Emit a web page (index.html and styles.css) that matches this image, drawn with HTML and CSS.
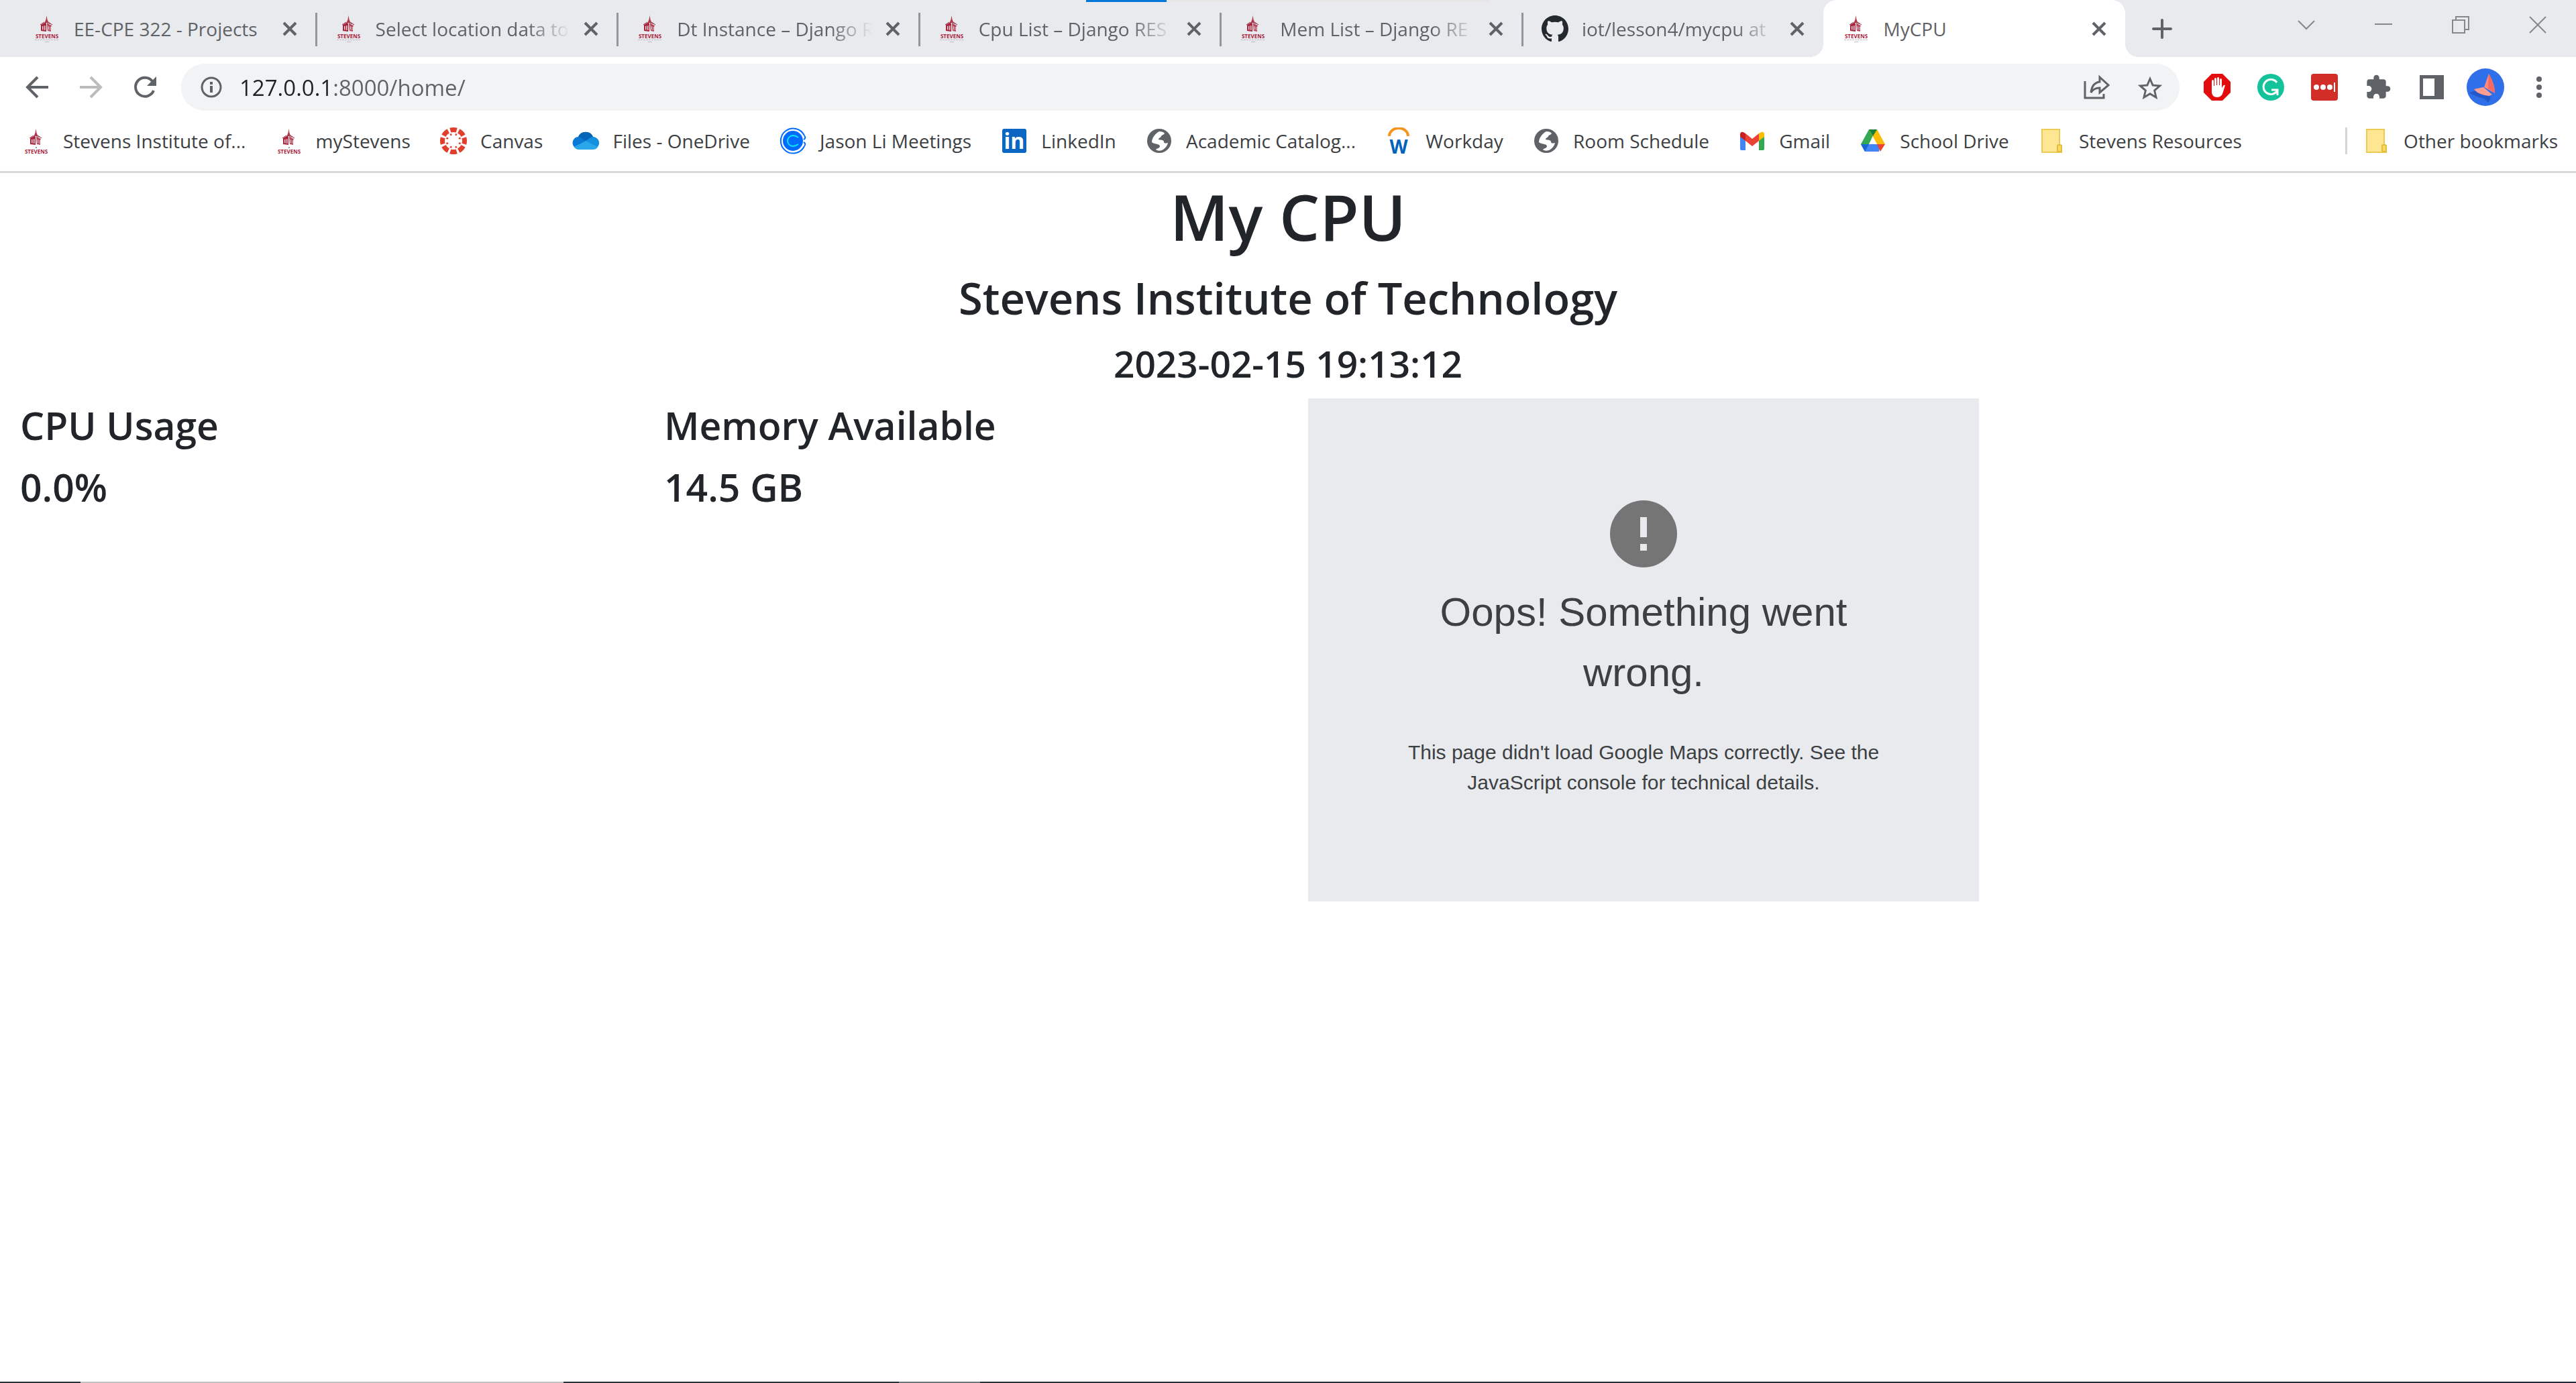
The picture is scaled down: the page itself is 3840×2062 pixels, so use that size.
FILE: index.html
```html
<!DOCTYPE html>
<html lang="en">
<head>
<meta charset="utf-8">
<title>MyCPU</title>
<link rel="stylesheet" href="styles.css">
</head>
<body>
<svg class="sprite" aria-hidden="true">
  <symbol id="tower" viewBox="0 0 40 26">
    <path d="M19.500 0l1 6 2 5h-6l2-5z" fill="#b4384c"/>
    <path d="M11 14l7-4 1 3 0 11-8-1z" fill="#a8233b"/>
    <path d="M20 12l7 3-1 2v7l-5-1z" fill="#b8465a"/>
    <path d="M13 16l1.500-.5v6l-1.500-.3zM16 15.500l1.500-.5v7l-1.500-.3zM22 16l1 .5v5l-1-.5zM24.500 17h.8v5h-.8z" fill="#efdde1"/>
    <path d="M10 14l6-4M22 10l6 4M20 12l5 0" stroke="#8d2438" fill="none"/>
  </symbol>
  <symbol id="stevens" viewBox="0 0 40 40">
    <use href="#tower" width="40" height="26"/>
    <text x="20" y="34" class="logo-word">STEVENS</text>
    <path d="M2 36.500h36" stroke="#c3bcc1" stroke-dasharray="3 1" fill="none"/>
    <path d="M17 39.500h6" stroke="#c3bcc1" fill="none"/>
  </symbol>
  <symbol id="stevens-tall" viewBox="0 0 40 40">
    <use href="#tower" y="1" width="40" height="28"/>
    <circle cx="20" cy="30" r="1" fill="#777"/>
    <text x="20" y="39" class="logo-word">STEVENS</text>
  </symbol>
  <symbol id="close" viewBox="0 0 22 22"><path d="M2 2l18 18M20 2L2 20" stroke="#5f6368" stroke-width="4" fill="none"/></symbol>
  <symbol id="globe" viewBox="0 0 40 40">
    <circle cx="20" cy="20" r="18" fill="#5f6368"/>
    <path d="M20 6c4 0 7 1 8 3-1 2-4 2-5 4-1 3-4 2-4 5 3 1 7 0 8 3 0 3 2 3 6 2-1 5-5 9-9 11-3 1-7 1-9-1 2-2 6-2 6-5 0-4-9-3-12-6 0-6 5-13 11-16z" fill="#fff"/>
  </symbol>
  <symbol id="folder" viewBox="0 0 40 40">
    <path d="M5 3h26v24h3v10H5z" fill="#ffe692" stroke="#eccb55" stroke-width="2"/>
    <path d="M28 36v-8q0-2 2-2h2q2 0 2 2v8z" fill="#ffd95f" stroke="#e3bd3d" stroke-width="2"/>
  </symbol>
</svg>

<header class="browser">
  <div class="load-strip"></div>
  <div class="tab-strip">
    <nav class="tabs" aria-label="Tabs">
      <div class="tab"><svg class="icon"><use href="#stevens"/></svg><span class="tab-title">EE-CPE 322 - Projects</span><button class="tab-close" aria-label="Close tab"><svg><use href="#close"/></svg></button></div>
      <div class="tab"><svg class="icon"><use href="#stevens"/></svg><span class="tab-title fade">Select location data to</span><button class="tab-close" aria-label="Close tab"><svg><use href="#close"/></svg></button></div>
      <div class="tab"><svg class="icon"><use href="#stevens"/></svg><span class="tab-title fade">Dt Instance – Django R</span><button class="tab-close" aria-label="Close tab"><svg><use href="#close"/></svg></button></div>
      <div class="tab"><svg class="icon"><use href="#stevens"/></svg><span class="tab-title fade">Cpu List – Django RES</span><button class="tab-close" aria-label="Close tab"><svg><use href="#close"/></svg></button></div>
      <div class="tab"><svg class="icon"><use href="#stevens"/></svg><span class="tab-title fade">Mem List – Django RE</span><button class="tab-close" aria-label="Close tab"><svg><use href="#close"/></svg></button></div>
      <div class="tab"><svg class="icon" viewBox="0 0 16 16"><path fill="#24292f" d="M8 0C3.580 0 0 3.580 0 8c0 3.540 2.290 6.530 5.470 7.590.4.070.55-.17.55-.38 0-.19-.01-.82-.01-1.490-2.010.37-2.530-.49-2.690-.94-.09-.23-.48-.94-.82-1.130-.28-.15-.68-.52-.01-.53.63-.01 1.080.58 1.230.82.72 1.210 1.870.87 2.330.66.070-.52.28-.87.51-1.070-1.780-.2-3.640-.89-3.640-3.950 0-.87.31-1.590.82-2.150-.08-.2-.36-1.020.08-2.120 0 0 .67-.21 2.200.82.64-.18 1.320-.27 2-.27s1.360.09 2 .27c1.530-1.040 2.200-.82 2.200-.82.44 1.100.16 1.920.08 2.120.51.56.82 1.270.82 2.150 0 3.070-1.870 3.750-3.650 3.950.29.25.54.73.54 1.480 0 1.070-.01 1.930-.01 2.200 0 .21.15.46.55.38A8.010 8.010 0 0 0 16 8c0-4.420-3.580-8-8-8z"/></svg><span class="tab-title fade">iot/lesson4/mycpu at</span><button class="tab-close" aria-label="Close tab"><svg><use href="#close"/></svg></button></div>
      <div class="tab active"><svg class="icon"><use href="#stevens"/></svg><span class="tab-title">MyCPU</span><button class="tab-close" aria-label="Close tab"><svg><use href="#close"/></svg></button></div>
    </nav>
    <button class="new-tab" aria-label="New tab"><svg viewBox="0 0 30 30"><path d="M15 2v26M2 15h26" stroke="#5f6368" stroke-width="4" stroke-linecap="round" fill="none"/></svg></button>
    <div class="window-controls">
      <button aria-label="Search tabs"><svg viewBox="0 0 26 26"><path d="M1 7l12 12L25 7"/></svg></button>
      <button aria-label="Minimize"><svg viewBox="0 0 26 26"><path d="M0 12h26"/></svg></button>
      <button aria-label="Restore"><svg viewBox="0 0 26 26"><path d="M1 6h18v19H1zM6 6V1h19v19h-6"/></svg></button>
      <button aria-label="Close window"><svg viewBox="0 0 26 26"><path d="M1 1l24 24M25 1L1 25"/></svg></button>
    </div>
  </div>

  <div class="toolbar">
    <button class="tool" aria-label="Back"><svg class="icon" viewBox="0 0 40 40"><path d="M36 20H6M20 5L5 20l15 15" stroke="#5f6368" stroke-width="4" fill="none"/></svg></button>
    <button class="tool" aria-label="Forward"><svg class="icon" viewBox="0 0 40 40"><path d="M3 20h30M19 5l15 15-15 15" stroke="#babcbe" stroke-width="4" fill="none"/></svg></button>
    <button class="tool" aria-label="Reload"><svg class="icon" viewBox="0 0 40 40"><path d="M33 25A14 14 0 1 1 31 11" stroke="#5f6368" stroke-width="4" fill="none"/><path d="M37 4v14H23z" fill="#5f6368"/></svg></button>
    <div class="omnibox">
      <svg class="info" viewBox="0 0 32 32"><circle cx="16" cy="16" r="14" stroke="#5f6368" stroke-width="3" fill="none"/><path d="M14 14h4v10h-4zM14 8h4v4h-4z" fill="#5f6368"/></svg>
      <input class="url" type="text" value="127.0.0.1:8000/home/" aria-label="Address" spellcheck="false">
      <button class="tool" aria-label="Share"><svg class="icon" viewBox="0 0 40 40"><path d="M3 11v25h28v-6" stroke="#5f6368" stroke-width="3" fill="none"/><path d="M25 5l13 12-13 11v-7c-6 0-10 2-13 7 1-9 5-15 13-16z" stroke="#5f6368" stroke-width="3" fill="none"/></svg></button>
      <button class="tool" aria-label="Bookmark this tab"><svg class="icon" viewBox="1 0 22 22"><path fill="#5f6368" d="M22 9.240l-7.190-.62L12 2 9.190 8.630 2 9.240l5.460 4.730L5.820 21 12 17.270 18.180 21l-1.630-7.030L22 9.240zM12 15.400l-3.760 2.270 1-4.280-3.320-2.880 4.380-.38L12 6.100l1.710 4.040 4.380.38-3.320 2.880 1 4.280L12 15.400z"/></svg></button>
    </div>
    <div class="extensions">
      <button class="tool" aria-label="AdBlock"><svg class="icon" viewBox="0 0 40 40"><path d="M12 0h16l12 12v16L28 40H12L0 28V12z" fill="#e40d0d"/><path d="M12 24V11q0-2 1.500-2T15 11v7h1V8q0-2 1.500-2T19 8v9h1V7q0-2 1.500-2T23 7v10h1V9q0-2 1.500-2T27 9v12l2-3q1-2 3-1l-3 10q-2 8-9 8t-8-7z" fill="#fff"/></svg></button>
      <button class="tool" aria-label="Grammarly"><svg class="icon" viewBox="0 0 40 40"><circle cx="20" cy="20" r="20" fill="#15c39a"/><path d="M29 13a11 11 0 1 0 0 13M21 24h9v8" stroke="#fff" stroke-width="3" fill="none"/></svg></button>
      <button class="tool" aria-label="LastPass"><svg class="icon" viewBox="0 0 40 40"><rect width="40" height="40" rx="4" fill="#d32d27"/><circle cx="8" cy="20" r="4" fill="#fff"/><circle cx="18" cy="20" r="4" fill="#fff"/><circle cx="28" cy="20" r="4" fill="#fff"/><path d="M35 13v14" stroke="#fff" stroke-width="2"/></svg></button>
      <button class="tool" aria-label="Extensions"><svg class="icon" viewBox="0 0 24 24"><path fill="#5f6368" d="M20.500 11H19V7c0-1.100-.9-2-2-2h-4V3.500a2.500 2.500 0 0 0-5 0V5H4c-1.100 0-1.990.9-1.990 2v3.800H3.500c1.490 0 2.700 1.210 2.700 2.700s-1.210 2.700-2.700 2.700H2V20c0 1.100.9 2 2 2h3.800v-1.500c0-1.490 1.210-2.700 2.700-2.700s2.700 1.210 2.700 2.700V22H17c1.100 0 2-.9 2-2v-4h1.500a2.500 2.500 0 0 0 0-5z"/></svg></button>
      <button class="tool" aria-label="Side panel"><svg class="icon" viewBox="0 0 40 40"><path fill="#5f6368" fill-rule="evenodd" d="M2 2h36v36H2zM7 7v26h17V7z"/></svg></button>
      <button class="tool avatar" aria-label="Profile"><svg viewBox="0 0 56 56"><circle cx="28" cy="28" r="28" fill="#2f6fea"/><path d="M4 36l20-6 12 14-4 7-6-6Q12 42 4 36z" fill="#2358c8"/><path d="M33 8c5 9 9 18 9 29l-16-9z" fill="#ff8a80"/><path d="M33 8l-1 22 10 7C42 27 38 17 33 8z" fill="#f5695f"/><path d="M11 31l14-3 13 11-5 2c-8-1-16-3-22-10z" fill="#ff9e90"/></svg></button>
      <button class="tool" aria-label="Menu"><svg class="icon" viewBox="0 0 40 40"><g fill="#5f6368"><circle cx="20" cy="8" r="4"/><circle cx="20" cy="20" r="4"/><circle cx="20" cy="32" r="4"/></g></svg></button>
    </div>
  </div>

  <nav class="bookmarks" aria-label="Bookmarks">
    <div class="bookmark-list">
      <a class="bookmark" href="#"><svg class="icon"><use href="#stevens-tall"/></svg>Stevens Institute of...</a>
      <a class="bookmark" href="#"><svg class="icon"><use href="#stevens-tall"/></svg>myStevens</a>
      <a class="bookmark" href="#"><svg class="icon" viewBox="0 0 40 40"><g fill="none" stroke="#e13f2b"><circle cx="20" cy="20" r="16.500" stroke-width="7" pathLength="80" stroke-dasharray="7.500 2.500" stroke-dashoffset="3.750"/><circle cx="20" cy="20" r="10" stroke-width="3" pathLength="80" stroke-dasharray="3 7" stroke-dashoffset="6.500"/></g></svg>Canvas</a>
      <a class="bookmark" href="#"><svg class="icon" viewBox="0 0 40 40"><path d="M10 32a9 9 0 0 1-1-18 12 12 0 0 1 22 0 9 9 0 0 1 0 18z" fill="#0a78d4"/><path d="M9 14a12 12 0 0 1 22 0q-3 0-5 2l-6 4-8-5z" fill="#0364b8"/><path d="M20 20l6-4q6-4 11 1 5 6 1 12z" fill="#1490df"/><path d="M3 29l17-9 18 9q-2 4-7 4H10q-5 0-7-4z" fill="#28a8ea"/></svg>Files - OneDrive</a>
      <a class="bookmark" href="#"><svg class="icon" viewBox="0 0 40 40"><circle cx="20" cy="20" r="15" fill="#006bff"/><path d="M37 12A18.500 18.500 0 1 0 37 28" fill="none" stroke="#006bff" stroke-width="2"/><path d="M37 12q3 4-1 6M37 28q3-4-1-6" stroke="#006bff" stroke-width="2" fill="none"/><path d="M28 15q-4-3-8-3a8 8 0 0 0 0 16q4 0 8-3" fill="none" stroke="#0ae8f0" stroke-width="2"/></svg>Jason Li Meetings</a>
      <a class="bookmark" href="#"><svg class="icon" viewBox="0 0 40 40"><rect x="2" y="2" width="36" height="36" rx="3" fill="#0a66c2"/><text x="20" y="32" class="logo-in">in</text></svg>LinkedIn</a>
      <a class="bookmark" href="#"><svg class="icon"><use href="#globe"/></svg>Academic Catalog...</a>
      <a class="bookmark" href="#"><svg class="icon" viewBox="0 0 40 40"><path d="M6 13a14 12 0 0 1 28 0" fill="none" stroke="#f7941d" stroke-width="4"/><text x="20" y="39" class="logo-w">W</text></svg>Workday</a>
      <a class="bookmark" href="#"><svg class="icon"><use href="#globe"/></svg>Room Schedule</a>
      <a class="bookmark" href="#"><svg class="icon" viewBox="0 0 40 40"><path d="M2 12l8 6v16H4q-2 0-2-2z" fill="#4285f4"/><path d="M30 18l8-6v20q0 2-2 2h-6z" fill="#34a853"/><path d="M30 9q6-5 8 0v5l-8 6z" fill="#fbbc04"/><path d="M10 9l10 8 10-8v11l-10 8-10-8z" fill="#ea4335"/><path d="M2 14V10q1-6 8-1v11z" fill="#c5221f"/></svg>Gmail</a>
      <a class="bookmark" href="#"><svg class="icon" viewBox="0 0 40 40"><path d="M14 3h6v9L9 36 2 25z" fill="#34a853"/><path d="M14 3h12l12 22H26z" fill="#fbbc04"/><path d="M14 3h12l-6 10z" fill="#188038"/><path d="M9 25h22l-2 11H8l-6-11z" fill="#4285f4"/><path d="M26 25h12l-7 11z" fill="#ea4335"/><path d="M2 25h12L8 36z" fill="#1967d2"/><path d="M20 14l6 11H14z" fill="#fff"/></svg>School Drive</a>
      <a class="bookmark" href="#"><svg class="icon"><use href="#folder"/></svg>Stevens Resources</a>
    </div>
    <div class="bookmark-other">
      <a class="bookmark" href="#"><svg class="icon"><use href="#folder"/></svg>Other bookmarks</a>
    </div>
  </nav>
</header>

<main class="page">
  <h1>My CPU</h1>
  <h2>Stevens Institute of Technology</h2>
  <h3 class="clock">2023-02-15 19:13:12</h3>
  <div class="row">
    <section class="col">
      <h3>CPU Usage</h3>
      <h3>0.0%</h3>
    </section>
    <section class="col">
      <h3>Memory Available</h3>
      <h3>14.5 GB</h3>
    </section>
    <section class="col">
      <div class="map">
        <svg class="map-icon" viewBox="0 0 100 100"><circle cx="50" cy="50" r="50" fill="#757575"/><path d="M45 25h10v30H45zM45 65h10v10H45z" fill="#e8eaed"/></svg>
        <p class="map-title">Oops! Something went wrong.</p>
        <p class="map-message">This page didn't load Google Maps correctly. See the JavaScript console for technical details.</p>
      </div>
    </section>
  </div>
</main>
<footer class="taskbar"></footer>
</body>
</html>
```
FILE: styles.css
```css
* { box-sizing: border-box; }

body {
  margin: 0;
  min-height: 100vh;
  display: flex;
  flex-direction: column;
  background: #fff;
  color: #212529;
  font-family: "Open Sans", sans-serif;
}

button {
  padding: 0;
  border: 0;
  background: none;
  font: inherit;
}

svg { display: block; flex: none; }

.sprite { position: absolute; width: 0; height: 0; }
.icon { width: 40px; height: 40px; }

.logo-word { font: 700 8px "Open Sans", sans-serif; fill: #a8233b; text-anchor: middle; }
.logo-in { font: 700 32px "Open Sans", sans-serif; fill: #fff; text-anchor: middle; }
.logo-w { font: 700 28px "Open Sans", sans-serif; fill: #0062b8; text-anchor: middle; }

/* Browser chrome */
.browser {
  position: relative;
  border-bottom: 3px solid #dadada;
  font-size: 28px;
}

.load-strip {
  position: absolute;
  z-index: 1;
  top: 0;
  left: 1619px;
  width: 602px;
  height: 3px;
  background: linear-gradient(to right, #0078d7 120px, #e6e6e6 120px);
}

.tab-strip {
  display: flex;
  height: 85px;
  padding-left: 21px;
  background: #e8eaed;
}

.tabs { display: flex; flex: 0 1 3147px; min-width: 0; }

.tab {
  position: relative;
  display: flex;
  align-items: center;
  gap: 20px;
  flex: 1 1 0;
  min-width: 0;
  padding: 0 28px 0 29px;
  color: #5f6368;
}

.tab:not(.active)::after {
  content: "";
  position: absolute;
  right: -2px;
  top: 19px;
  width: 3px;
  height: 50px;
  background: #93969b;
}

.tab:nth-last-child(2)::after { display: none; }

.tab.active {
  background: #fff;
  border-radius: 20px 20px 0 0;
}

.tab.active::before,
.tab.active::after {
  content: "";
  position: absolute;
  bottom: 0;
  width: 20px;
  height: 20px;
}

.tab.active::before {
  right: 100%;
  background: radial-gradient(circle at 0 0, transparent 20px, #fff 20px);
}

.tab.active::after {
  left: 100%;
  background: radial-gradient(circle at 100% 0, transparent 20px, #fff 20px);
}

.tab-title {
  flex: 1;
  min-width: 0;
  overflow: hidden;
  white-space: nowrap;
}

.fade {
  -webkit-mask-image: linear-gradient(to left, transparent, #000 64px);
  mask-image: linear-gradient(to left, transparent, #000 64px);
}

.tab-close svg { width: 22px; height: 22px; }

.new-tab { margin-left: 40px; }
.new-tab svg { width: 30px; height: 30px; }

.window-controls { display: flex; height: 74px; margin-left: auto; }
.window-controls button { display: grid; place-items: center; width: 115px; }
.window-controls svg { width: 26px; height: 26px; fill: none; stroke: #85878a; stroke-width: 2; }

.toolbar {
  display: flex;
  align-items: center;
  gap: 40px;
  height: 90px;
  padding: 0 35px 0 36px;
}

.omnibox {
  display: flex;
  align-items: center;
  gap: 40px;
  flex: 1;
  height: 70px;
  margin: 0 -4px 0 -6px;
  padding: 0 24px 0 29px;
  border-radius: 35px;
  background: #f1f3f4;
}

.info { width: 32px; height: 32px; margin-right: -14px; }

.url {
  flex: 1;
  min-width: 0;
  padding: 0;
  border: 0;
  font: inherit;
  font-size: 33px;
  color: transparent;
  background: linear-gradient(to right, #202124 140px, #5f6368 140px);
  -webkit-background-clip: text;
  background-clip: text;
}

.extensions { display: flex; align-items: center; gap: 40px; }
.avatar { margin: 0 -8px; }
.avatar svg { width: 56px; height: 56px; }

.bookmarks {
  display: flex;
  justify-content: space-between;
  align-items: center;
  height: 80px;
  padding: 0 27px 10px 34px;
}

.bookmark-list {
  display: flex;
  justify-content: space-between;
  flex: 0 1 3308px;
}

.bookmark {
  display: flex;
  align-items: center;
  gap: 20px;
  color: #3c4043;
  text-decoration: none;
  white-space: nowrap;
}

.bookmark-other { padding-left: 24px; border-left: 3px solid #d3d5d8; }

/* Page content */
.page { flex: 1; }

h1, h2, h3 {
  margin: 0 0 16px;
  padding-top: 4px;
  font-weight: 600;
}

h1 { font-size: 95px; line-height: 120px; text-align: center; }
h2 { font-size: 65px; line-height: 84px; text-align: center; }
h3 { font-size: 57px; line-height: 72px; }
.clock { font-size: 55px; text-align: center; }

.row { display: grid; grid-template-columns: repeat(4, minmax(0, 1fr)); }
.col { padding: 0 30px; }

.map {
  display: flex;
  flex-direction: column;
  align-items: center;
  width: 1000px;
  height: 750px;
  padding: 152px 130px 0;
  background: #e8eaed;
  color: #3c4043;
  font-family: "Liberation Sans", Arial, sans-serif;
  text-align: center;
}

.map-icon { width: 100px; height: 100px; }
.map-title { margin: 22px 0 51px; font-size: 60px; line-height: 90px; }
.map-message { margin: 0; font-size: 30px; line-height: 45px; }

.col:last-child { padding-left: 30px; padding-right: 0; }

.taskbar {
  height: 2px;
  background: linear-gradient(to right, #263238 120px, #c0c0c0 120px 840px, #263238 840px 1340px, #6b777b 1340px 1461px, #263238 1461px, #1f2a3c);
}
```
